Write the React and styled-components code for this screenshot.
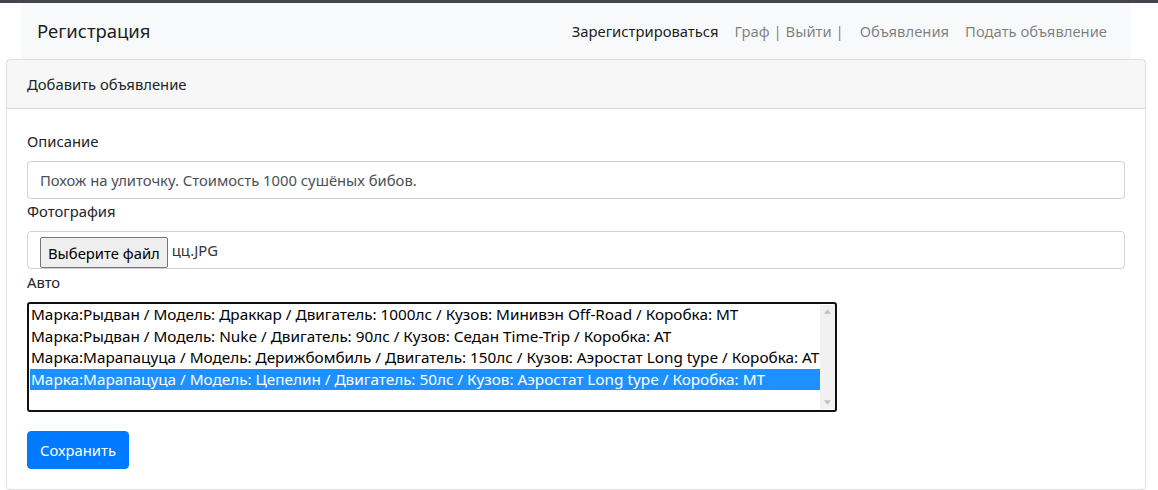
import React from 'react';
import styled, { createGlobalStyle } from 'styled-components';

const GlobalStyle = createGlobalStyle`
  * { box-sizing: border-box; }
  body {
    margin: 0;
    background: #fff;
    font-family: "Noto Sans", "Open Sans", sans-serif;
    font-size: 15px;
    color: #212529;
  }
`;

const cars = [
  'Марка:Рыдван / Модель: Драккар / Двигатель: 1000лс / Кузов: Минивэн Off-Road / Коробка: MT',
  'Марка:Рыдван / Модель: Nuke / Двигатель: 90лс / Кузов: Седан Time-Trip / Коробка: AT',
  'Марка:Марапацуца / Модель: Дерижбомбиль / Двигатель: 150лс / Кузов: Аэростат Long type / Коробка: AT',
  'Марка:Марапацуца / Модель: Цепелин / Двигатель: 50лс / Кузов: Аэростат Long type / Коробка: MT',
];

function App() {
  return (
    <Page>
      <GlobalStyle />
      <TopStrip />
      <Navbar>
        <Brand>Регистрация</Brand>
        <NavList>
          <NavLink $active>Зарегистрироваться</NavLink>
          <NavLink>Граф | Выйти |</NavLink>
          <NavLink>Объявления</NavLink>
          <NavLink>Подать объявление</NavLink>
        </NavList>
      </Navbar>
      <Card>
        <CardHeader>Добавить объявление</CardHeader>
        <CardBody>
          <Label>Описание</Label>
          <TextInput>Похож на улиточку. Стоимость 1000 сушёных бибов.</TextInput>
          <Label>Фотография</Label>
          <FileBox>
            <FileButton>Выберите файл</FileButton>
            <FileName>цц.JPG</FileName>
          </FileBox>
          <Label>Авто</Label>
          <ListBox>
            <Options>
              {cars.map((c, i) => (
                <Option key={i} $selected={i === 3}>{c}</Option>
              ))}
            </Options>
            <ScrollTrack>
              <Arrow viewBox="0 0 8 5"><path d="M0 5 L4 0 L8 5 Z" /></Arrow>
              <Arrow viewBox="0 0 8 5"><path d="M0 0 L4 5 L8 0 Z" /></Arrow>
            </ScrollTrack>
          </ListBox>
          <SaveButton>Сохранить</SaveButton>
        </CardBody>
      </Card>
    </Page>
  );
}

export default App;

const Page = styled.div`
  width: 1158px;
  height: 490px;
  overflow: hidden;
`;

const TopStrip = styled.div`
  height: 3px;
  background: #45444d;
`;

const Navbar = styled.nav`
  margin-left: 21px;
  width: 1110px;
  height: 56px;
  padding: 8px 16px;
  background: #f8f9fa;
  display: flex;
  align-items: center;
  justify-content: space-between;
`;

const Brand = styled.div`
  font-size: 18.5px;
  color: rgba(0, 0, 0, 0.9);
  line-height: 30px;
`;

const NavList = styled.div`
  display: flex;
`;

const NavLink = styled.span`
  padding: 8px 8px;
  font-size: 14.8px;
  color: ${(p) => (p.$active ? 'rgba(0,0,0,0.9)' : 'rgba(0,0,0,0.5)')};
`;

const Card = styled.div`
  margin-left: 6px;
  width: 1140px;
  height: 431px;
  border: 1px solid rgba(0, 0, 0, 0.125);
  border-radius: 4px;
  display: flex;
  flex-direction: column;
`;

const CardHeader = styled.div`
  height: 49px;
  padding: 12px 20px;
  font-size: 14.8px;
  line-height: 24px;
  background: rgba(0, 0, 0, 0.03);
  border-bottom: 1px solid rgba(0, 0, 0, 0.125);
`;

const CardBody = styled.div`
  padding: 20px 20px;
  display: flex;
  flex-direction: column;
  align-items: flex-start;
`;

const Label = styled.div`
  font-size: 14.8px;
  line-height: 24px;
  margin-bottom: 8px;
`;

const TextInput = styled.div`
  width: 1098px;
  height: 38px;
  padding: 6px 12px;
  border: 1px solid #ced4da;
  border-radius: 4px;
  color: #495057;
  font-size: 14.8px;
  line-height: 24px;
`;

const FileBox = styled(TextInput)`
  display: flex;
  align-items: center;
  gap: 4px;
  color: #212529;
  margin-bottom: 1px;
`;

const FileButton = styled.div`
  height: 31px;
  margin-top: 5px;
  padding: 0 7px;
  display: flex;
  align-items: center;
  font-size: 14.8px;
  background: #efefef;
  border: 1px solid #767676;
  border-radius: 2px;
  color: #000;
`;

const FileName = styled.span`
  font-size: 14.8px;
  color: #333;
`;

const ListBox = styled.div`
  width: 810px;
  height: 110px;
  border: 2px solid #111;
  border-radius: 3px;
  display: flex;
  padding: 0 0 0 1px;
`;

const Options = styled.div`
  flex: 1;
  display: flex;
  flex-direction: column;
`;

const Option = styled.div`
  height: 21.5px;
  line-height: 21.5px;
  padding-left: 1px;
  font-size: 15.3px;
  white-space: nowrap;
  color: ${(p) => (p.$selected ? '#fff' : '#000')};
  background: ${(p) => (p.$selected ? '#1e90ff' : 'transparent')};
`;

const ScrollTrack = styled.div`
  width: 15px;
  margin: 1px 0;
  background: #f1f1f1;
  display: flex;
  flex-direction: column;
  justify-content: space-between;
  align-items: center;
  padding: 4px 0;
`;

const Arrow = styled.svg`
  width: 7px;
  height: 5px;
  fill: #c1c1c1;
`;

const SaveButton = styled.button`
  margin-top: 19px;
  height: 38px;
  padding: 6px 12px;
  background: #007bff;
  color: #fff;
  border: 1px solid #007bff;
  border-radius: 4px;
  font-family: inherit;
  font-size: 14.8px;
  line-height: 24px;
`;
